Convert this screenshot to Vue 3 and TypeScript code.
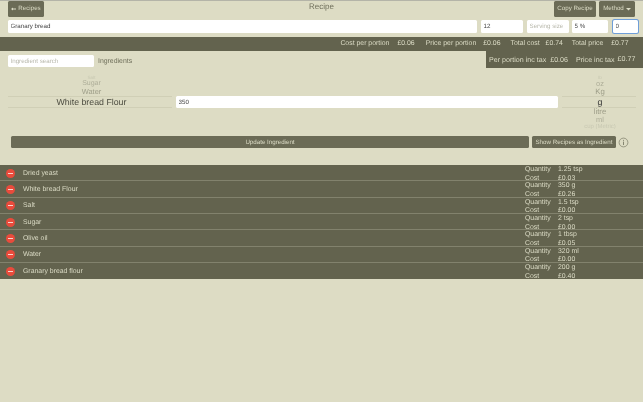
<script setup lang="ts">
const totals = [
  { label: 'Cost per portion', value: '£0.06', inner: 8, gap: 11 },
  { label: 'Price per portion', value: '£0.06', inner: 7, gap: 10 },
  { label: 'Total cost', value: '£0.74', inner: 6, gap: 9 },
  { label: 'Total price', value: '£0.77', inner: 8, gap: 0 },
]
const items = [
  { name: 'Dried yeast', qty: '1.25 tsp', cost: '£0.03' },
  { name: 'White bread Flour', qty: '350 g', cost: '£0.26' },
  { name: 'Salt', qty: '1.5 tsp', cost: '£0.00' },
  { name: 'Sugar', qty: '2 tsp', cost: '£0.00' },
  { name: 'Olive oil', qty: '1 tbsp', cost: '£0.05' },
  { name: 'Water', qty: '320 ml', cost: '£0.00' },
  { name: 'Granary bread flour', qty: '200 g', cost: '£0.40' },
]
</script>

<template>
  <div class="page">
    <header class="top">
      <button class="btn recipes">
        <svg width="5" height="4" viewBox="0 0 5 4"><path d="M0 2 2 .5V1.6H5V2.4H2V3.5Z" fill="currentColor" /></svg>
        Recipes
      </button>
      <h1>Recipe</h1>
      <div class="top-right">
        <button class="btn">Copy Recipe</button>
        <button class="btn">
          Method
          <svg width="5" height="4" viewBox="0 0 5 4"><path d="M0 1H5L2.5 3.5Z" fill="currentColor" /></svg>
        </button>
      </div>
    </header>

    <div class="fields">
      <input class="name" value="Granary bread" />
      <input class="portions" value="12" />
      <input class="serving" placeholder="Serving size" />
      <input class="tax" value="5 %" />
      <input class="zero" value="0" />
    </div>

    <div class="totals">
      <template v-for="t in totals" :key="t.label">
        <span>{{ t.label }}</span>
        <span :style="{ marginLeft: t.inner + 'px', marginRight: t.gap + 'px' }">{{ t.value }}</span>
      </template>
    </div>

    <div class="search-row">
      <div class="search">
        <input placeholder="Ingredient search" />
        <span>Ingredients</span>
      </div>
      <div class="tax-totals">
        <span>Per portion inc tax</span><span class="v1">£0.06</span>
        <span class="second">Price inc tax</span><span class="last">£0.77</span>
      </div>
    </div>

    <div class="pickers">
      <div class="wheel left">
        <span class="w1">Salt</span>
        <span class="w2">Sugar</span>
        <span class="w3">Water</span>
        <span class="sel">White bread Flour</span>
      </div>
      <input class="amount" value="350" />
      <div class="wheel right">
        <span class="w1">lb</span>
        <span class="w2">oz</span>
        <span class="w3">Kg</span>
        <span class="sel unit">g</span>
        <span class="w3">litre</span>
        <span class="w2">ml</span>
        <span class="w1 clip">cup (Metric)</span>
      </div>
    </div>

    <div class="actions">
      <button class="btn update">Update Ingredient</button>
      <button class="btn show">Show Recipes as Ingredient</button>
      <svg class="info" width="11" height="11" viewBox="0 0 11 11">
        <circle cx="5.5" cy="5.5" r="4.4" fill="none" stroke="#7a7a66" stroke-width=".7" />
        <path d="M5.5 4.6V8" stroke="#7a7a66" stroke-width=".9" />
        <circle cx="5.5" cy="3.2" r=".55" fill="#7a7a66" />
      </svg>
    </div>

    <ul class="list">
      <li v-for="i in items" :key="i.name">
        <span class="minus"><b></b></span>
        <span class="item-name">{{ i.name }}</span>
        <div class="meta">
          <span>Quantity</span><span>{{ i.qty }}</span>
          <span>Cost</span><span>{{ i.cost }}</span>
        </div>
      </li>
    </ul>
  </div>
</template>

<style>
html, body { margin: 0; background: #dddcc4; }
</style>

<style scoped>
* { box-sizing: border-box; }
.page {
  width: 643px; height: 402px; overflow: hidden; background: #dddcc4;
  border-top: 1px solid #b4b4a8;
  font-family: "Liberation Sans", Arial, sans-serif; font-size: 7.1px; color: #63634e;
  text-rendering: geometricPrecision;
  filter: blur(.3px);
}
input {
  border: 0; border-radius: 1.5px; background: #fff; height: 12.5px; padding: 0 2.5px; margin: 0;
  font: 6.2px "Liberation Sans", Arial, sans-serif; color: #444; outline: none; display: block;
  text-rendering: geometricPrecision;
}
input::placeholder { color: #b9b9ad; opacity: 1; }
.btn {
  border: 0; border-radius: 1.5px; background: #6b6b56; color: #dcdcc6; padding: 0; margin: 0;
  font: 6.2px "Liberation Sans", Arial, sans-serif; display: flex; align-items: center; justify-content: center; gap: 2px;
  text-rendering: geometricPrecision;
}
.top { display: flex; height: 15.5px; padding: 0 8px; align-items: stretch; justify-content: space-between; position: relative; }
.recipes { width: 36px; }
h1 { margin: 0; position: absolute; left: 0; right: 0; top: 1px; text-align: center; font-size: 8px; font-weight: 400; color: #6e6e5a; line-height: 9px; }
.top-right { display: flex; gap: 3px; position: relative; }
.top-right .btn:first-child { width: 42px; }
.top-right .btn:last-child { width: 36px; }
.fields { display: flex; padding: 3.5px 5px 0 8px; height: 20px; }
.name { width: 469px; margin-right: 4px; }
.portions { width: 42px; margin-right: 4px; }
.serving { width: 42px; margin-right: 3px; }
.tax { width: 36px; margin-right: 5px; }
.zero { width: 25px; box-shadow: 0 0 0 1px #6f9ed8; }
.totals { height: 14.5px; background: #63634e; color: #dcdcc6; display: flex; align-items: center; justify-content: flex-end; padding-right: 14.5px; white-space: nowrap; font-size: 6.9px; }
.search-row { display: flex; justify-content: space-between; height: 17px; }
.search { display: flex; align-items: center; gap: 4px; padding: 4px 0 0 8px; align-self: flex-start; }
.search input { width: 86px; height: 12px; }
.search span { font-size: 6.9px; color: #6e6e5a; }
.tax-totals { width: 157px; background: #63634e; color: #dcdcc6; display: flex; align-items: center; padding-left: 3px; white-space: nowrap; }
.v1 { margin-left: 4px; }
.second { margin-left: 8px; }
.last { margin-left: 3px; position: relative; top: -1px; }
.pickers { display: flex; align-items: flex-start; padding: 7px 7px 0 8px; height: 68px; }
.wheel { display: flex; flex-direction: column; align-items: center; }
.wheel.left { width: 164px; margin-right: 4px; }
.wheel.right { width: 74px; margin-left: 4px; }
.left .w1, .left .w2, .left .w3 { margin-left: 3px; }
.right .w1, .right .w2, .right .w3 { margin-left: 2px; }
.w1 { font-size: 4.6px; height: 5px; line-height: 5px; color: #c8c8b2; white-space: nowrap; }
.w2 { font-size: 7px; height: 8px; line-height: 8px; color: #aeae99; }
.w3 { font-size: 7.4px; height: 8px; line-height: 8.6px; color: #9e9e89; }
.right .w2 { font-size: 7.4px; }
.right .w3 { font-size: 7.8px; }
.clip { font-size: 6px; height: 5px; overflow: hidden; line-height: 7px; }
.sel { width: 100%; height: 12px; border-top: 1px solid #d0cfb6; border-bottom: 1px solid #d0cfb6; font-size: 8.8px; color: #4c4c40; text-align: center; line-height: 10px; }
.left .sel { text-indent: 3px; }
.right .sel { text-indent: 2px; }
.unit { color: #333; }
.amount { width: 382px; margin-top: 21px; height: 12px; }
.actions { display: flex; align-items: center; padding-left: 11px; height: 12px; gap: 3px; }
.update { width: 518px; height: 12px; }
.show { width: 84px; height: 12px; }
.info { margin-left: -1px; }
.list { list-style: none; margin: 17px 0 0; padding: 0; background: #63634e; }
li { height: 16.35px; display: flex; align-items: center; border-bottom: 1px solid #82826d; padding: 1px 0 0 6px; color: #dcdcc6; }
li:last-child { border-bottom: 0; }
.minus { width: 9px; height: 9px; border-radius: 50%; background: #e94b3c; display: flex; align-items: center; justify-content: center; }
.minus b { display: block; width: 5px; height: 1px; background: #f6d6ce; }
.item-name { margin-left: 8px; font-size: 6.9px; flex: 1; }
.meta { width: 118px; display: grid; grid-template-columns: 33px 1fr; font-size: 6.9px; line-height: 8.6px; align-self: flex-start; }
</style>
